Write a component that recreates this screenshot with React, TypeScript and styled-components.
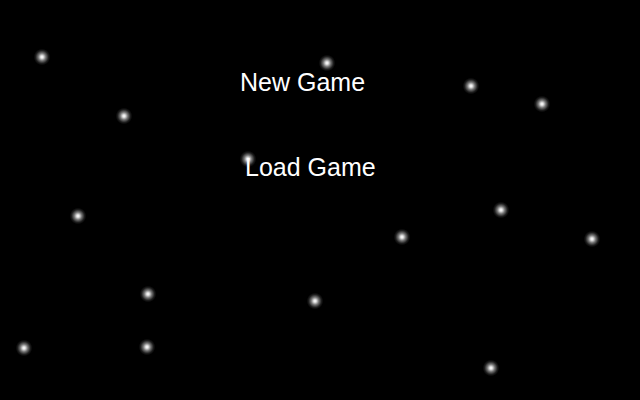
import React from 'react'
import styled, { createGlobalStyle } from 'styled-components'

const GlobalStyle = createGlobalStyle`
  html, body {
    margin: 0;
    padding: 0;
    background: #000;
  }
`

const Screen = styled.div`
  position: relative;
  width: 640px;
  height: 400px;
  overflow: hidden;
  background: #000;
  font-family: 'Liberation Sans', Arial, sans-serif;
`

const Sky = styled.div`
  position: absolute;
  inset: 0;
  pointer-events: none;
`

const Star = styled.div`
  position: absolute;
  width: 18px;
  height: 18px;
  margin: -9px 0 0 -9px;
  border-radius: 50%;
  background: radial-gradient(
    circle,
    rgba(255, 255, 255, 1) 0,
    rgba(255, 255, 255, 0.9) 10%,
    rgba(255, 255, 255, 0.45) 30%,
    rgba(255, 255, 255, 0.12) 50%,
    rgba(255, 255, 255, 0) 65%
  );
`

const Menu = styled.nav`
  position: relative;
  display: flex;
  flex-direction: column;
  align-items: flex-start;
  gap: 60px;
  padding-top: 70px;
`

const MenuItem = styled.div<{ $indent: number }>`
  margin-left: ${({ $indent }) => $indent}px;
  color: #fff;
  font-size: 25px;
  line-height: 25px;
  cursor: pointer;
  white-space: nowrap;
`

const stars: [number, number][] = [
  [41.7, 56.7],
  [326.7, 63.3],
  [471, 86],
  [541.7, 103.7],
  [124, 116],
  [248.3, 159.3],
  [77.7, 215.7],
  [501, 210],
  [401.7, 236.7],
  [592, 239],
  [147.7, 294],
  [314.7, 300.7],
  [23.7, 347.7],
  [146.7, 346.7],
  [490.7, 367.7],
]

const App: React.FC = () => {
  return (
    <>
      <GlobalStyle />
      <Screen>
        <Sky>
          {stars.map(([x, y], i) => (
            <Star key={i} style={{ left: x, top: y }} />
          ))}
        </Sky>
        <Menu>
          <MenuItem $indent={240}>New Game</MenuItem>
          <MenuItem $indent={245}>Load Game</MenuItem>
        </Menu>
      </Screen>
    </>
  )
}

export default App
